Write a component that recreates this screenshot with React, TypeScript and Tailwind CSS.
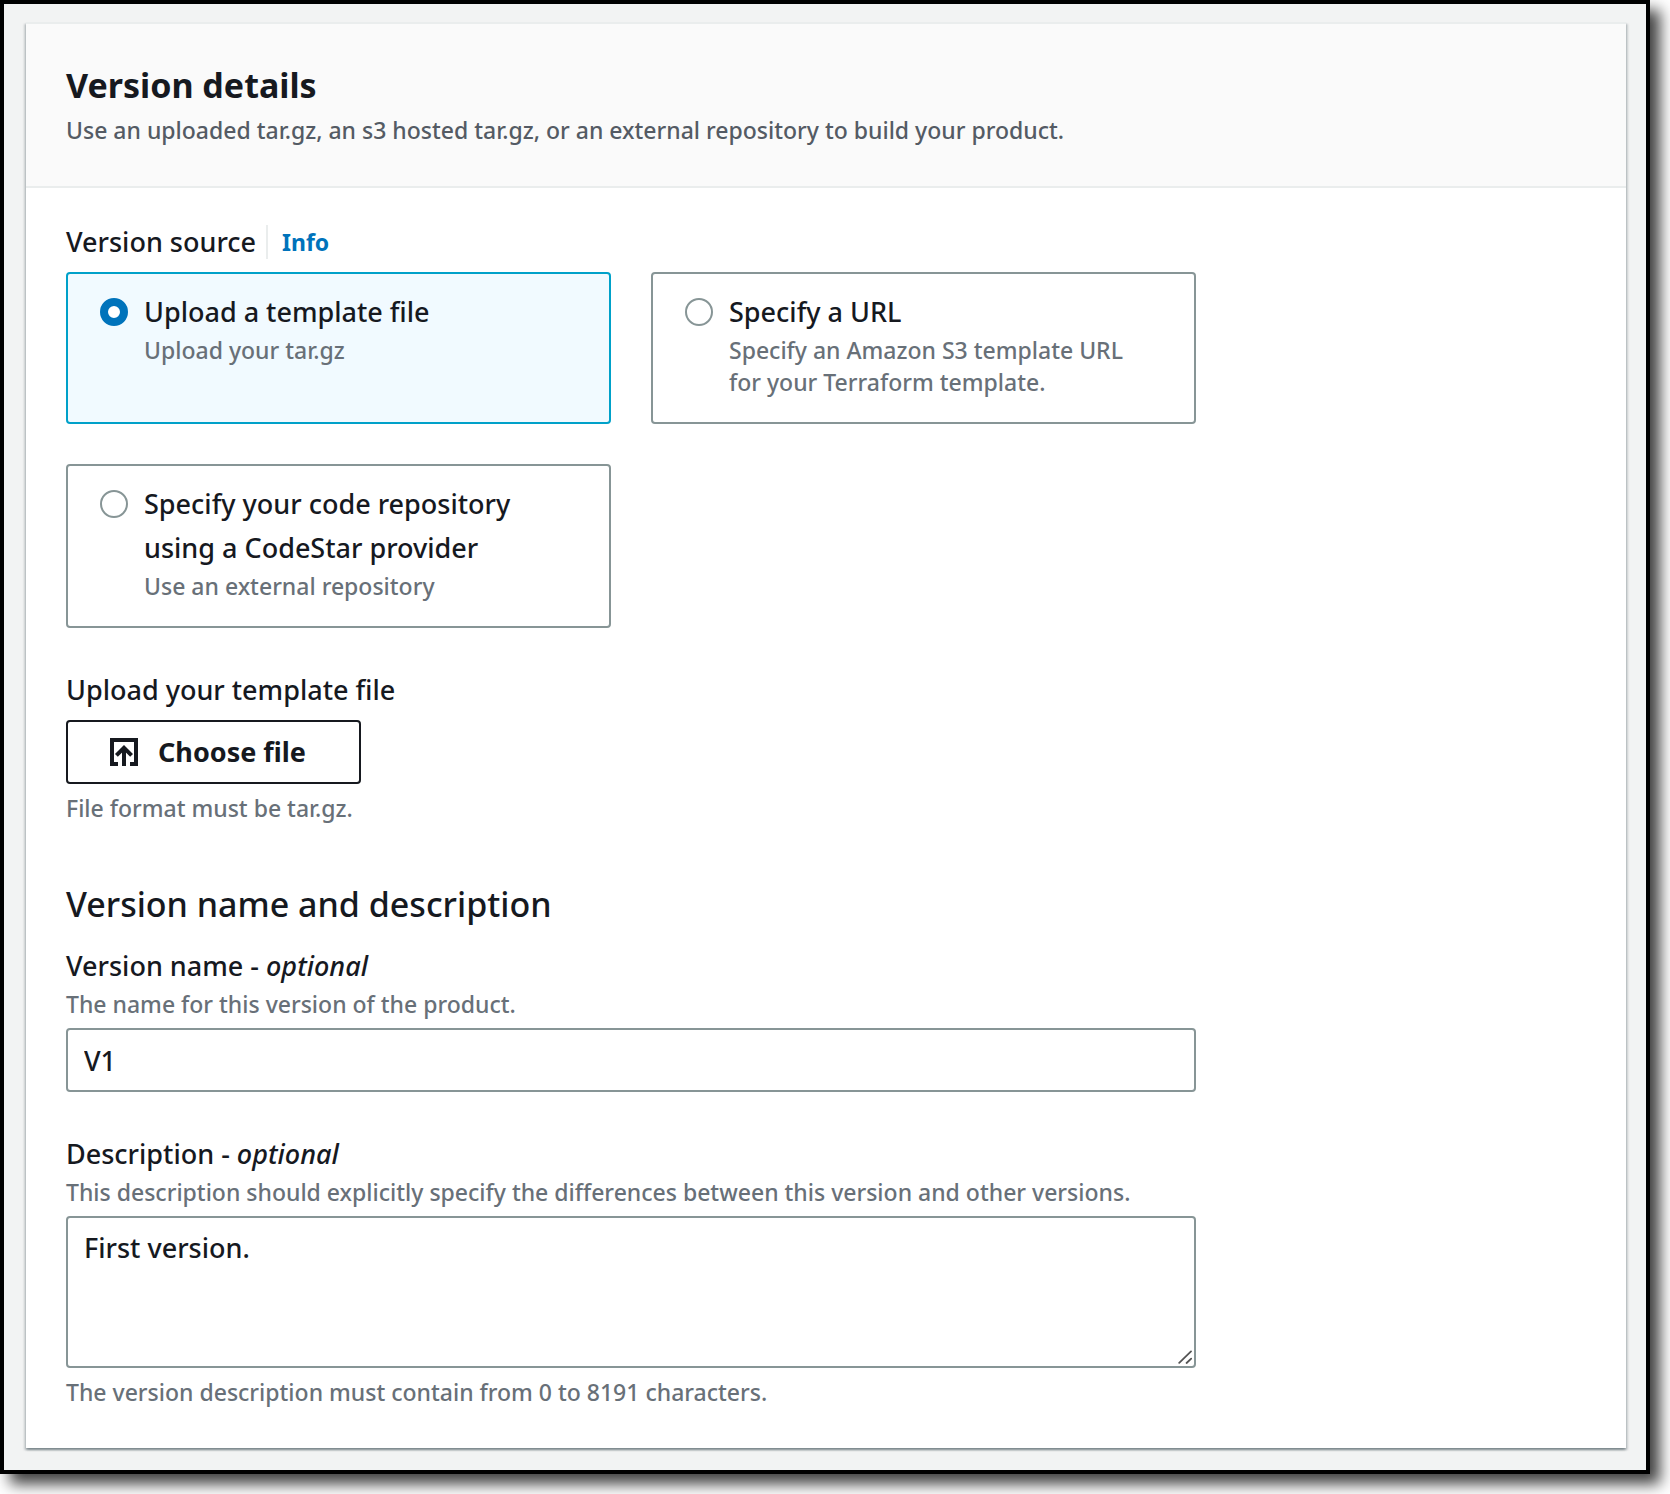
import { useState } from "react";

const sources = [
  {
    id: "upload",
    title: "Upload a template file",
    text: "Upload your tar.gz",
  },
  {
    id: "url",
    title: "Specify a URL",
    text: "Specify an Amazon S3 template URL for your Terraform template.",
  },
  {
    id: "repository",
    title: "Specify your code repository using a CodeStar provider",
    text: "Use an external repository",
  },
];

function UploadIcon() {
  return (
    <svg width="28" height="28" viewBox="0 0 28 28" fill="none" stroke="currentColor" strokeWidth="4" aria-hidden="true">
      <path d="M8 26H2V2h24v24h-6" />
      <path d="M14 28V10" />
      <path d="M6.4 17.4 14 9.8l7.6 7.6" />
    </svg>
  );
}

// drawn over the textarea corner, in place of the browser's own grip
function ResizeGrip() {
  return (
    <svg
      width="14"
      height="14"
      viewBox="0 0 14 14"
      fill="none"
      stroke="#545454"
      strokeWidth="1.8"
      strokeLinecap="round"
      className="pointer-events-none absolute right-1 bottom-1"
      aria-hidden="true"
    >
      <path d="M1.2 12.8 13 1.4" />
      <path d="m8.6 13 4.6-4.4" />
    </svg>
  );
}

function Hint({ id, children }: { id?: string; children: React.ReactNode }) {
  return (
    <p id={id} className="text-[23px] leading-8 text-[#687078]">
      {children}
    </p>
  );
}

export default function App() {
  const [source, setSource] = useState("upload");
  const [name, setName] = useState("V1");
  const [description, setDescription] = useState("First version.");

  return (
    <div className="bg-white pr-5 pb-5 font-['Noto_Sans',sans-serif] text-[27px] leading-11 font-medium text-[#16191f]">
      <main className="border-4 border-black bg-[#f2f3f3] pt-[18px] pr-5 pb-[22px] pl-[22px] shadow-[10px_10px_14px_rgba(0,0,0,0.75)]">
        <section className="border-t-2 border-[#eaeded] bg-white shadow-[0_2px_2px_rgba(0,28,36,0.3),2px_2px_2px_rgba(0,28,36,0.15),-2px_2px_2px_rgba(0,28,36,0.15)]">
          <header className="border-b-2 border-[#eaeded] bg-[#fafafa] p-10">
            <h2 className="text-[34px] leading-[42px] font-bold">Version details</h2>
            <p className="mt-2 text-[23px] leading-8 text-[#545b64]">
              Use an uploaded tar.gz, an s3 hosted tar.gz, or an external repository to build your product.
            </p>
          </header>

          <form className="px-10 pt-8 pb-10" onSubmit={(e) => e.preventDefault()}>
            <div className="max-w-[1130px]">
              <div className="mb-2 flex items-center">
                <span id="source-label">Version source</span>
                <a
                  href="#info"
                  className="ml-2.5 border-l-2 border-[#eaeded] pl-3.5 text-[23px] leading-[34px] font-bold text-[#0073bb]"
                >
                  Info
                </a>
              </div>
              <div role="radiogroup" aria-labelledby="source-label" className="grid grid-cols-2 gap-10">
                {sources.map((item) => (
                  <label
                    key={item.id}
                    className="flex gap-4 rounded-sm border-2 border-[#879596] bg-white pt-4 pr-12 pb-6 pl-8 has-checked:border-[#00a1c9] has-checked:bg-[#f1faff]"
                  >
                    <input
                      type="radio"
                      name="source"
                      value={item.id}
                      checked={source === item.id}
                      onChange={() => setSource(item.id)}
                      className="mt-2 size-7 shrink-0 appearance-none rounded-full border-2 border-[#879596] bg-white checked:border-8 checked:border-[#0073bb]"
                    />
                    <span>
                      <span className="block">{item.title}</span>
                      <span className="block text-[23px] leading-8 text-[#687078]">{item.text}</span>
                    </span>
                  </label>
                ))}
              </div>

              <div className="mt-10">
                <span id="file-label" className="mb-2 block">
                  Upload your template file
                </span>
                <button
                  type="button"
                  aria-describedby="file-label"
                  className="mb-2 flex h-16 items-center gap-5 rounded-sm border-2 border-[#16191f] bg-white pr-[53px] pl-[42px] font-bold"
                >
                  <UploadIcon />
                  Choose file
                </button>
                <Hint>File format must be tar.gz.</Hint>
              </div>

              <h3 className="mt-[58px] mb-[18px] text-[34px] leading-11">Version name and description</h3>

              <label htmlFor="version-name" className="block">
                Version name - <i>optional</i>
              </label>
              <Hint id="name-hint">The name for this version of the product.</Hint>
              <input
                id="version-name"
                type="text"
                aria-describedby="name-hint"
                value={name}
                onChange={(e) => setName(e.target.value)}
                className="mt-2 block h-16 w-full rounded-sm border-2 border-[#879596] bg-white px-4"
              />

              <label htmlFor="description" className="mt-10 block">
                Description - <i>optional</i>
              </label>
              <Hint>
                This description should explicitly specify the differences between this version and other versions.
              </Hint>
              <div className="relative my-2">
                <textarea
                  id="description"
                  aria-describedby="description-hint"
                  value={description}
                  onChange={(e) => setDescription(e.target.value)}
                  className="block h-38 w-full resize-y rounded-sm border-2 border-[#879596] bg-white px-4 py-2 [&::-webkit-resizer]:hidden"
                />
                <ResizeGrip />
              </div>
              <Hint id="description-hint">The version description must contain from 0 to 8191 characters.</Hint>
            </div>
          </form>
        </section>
      </main>
    </div>
  );
}
